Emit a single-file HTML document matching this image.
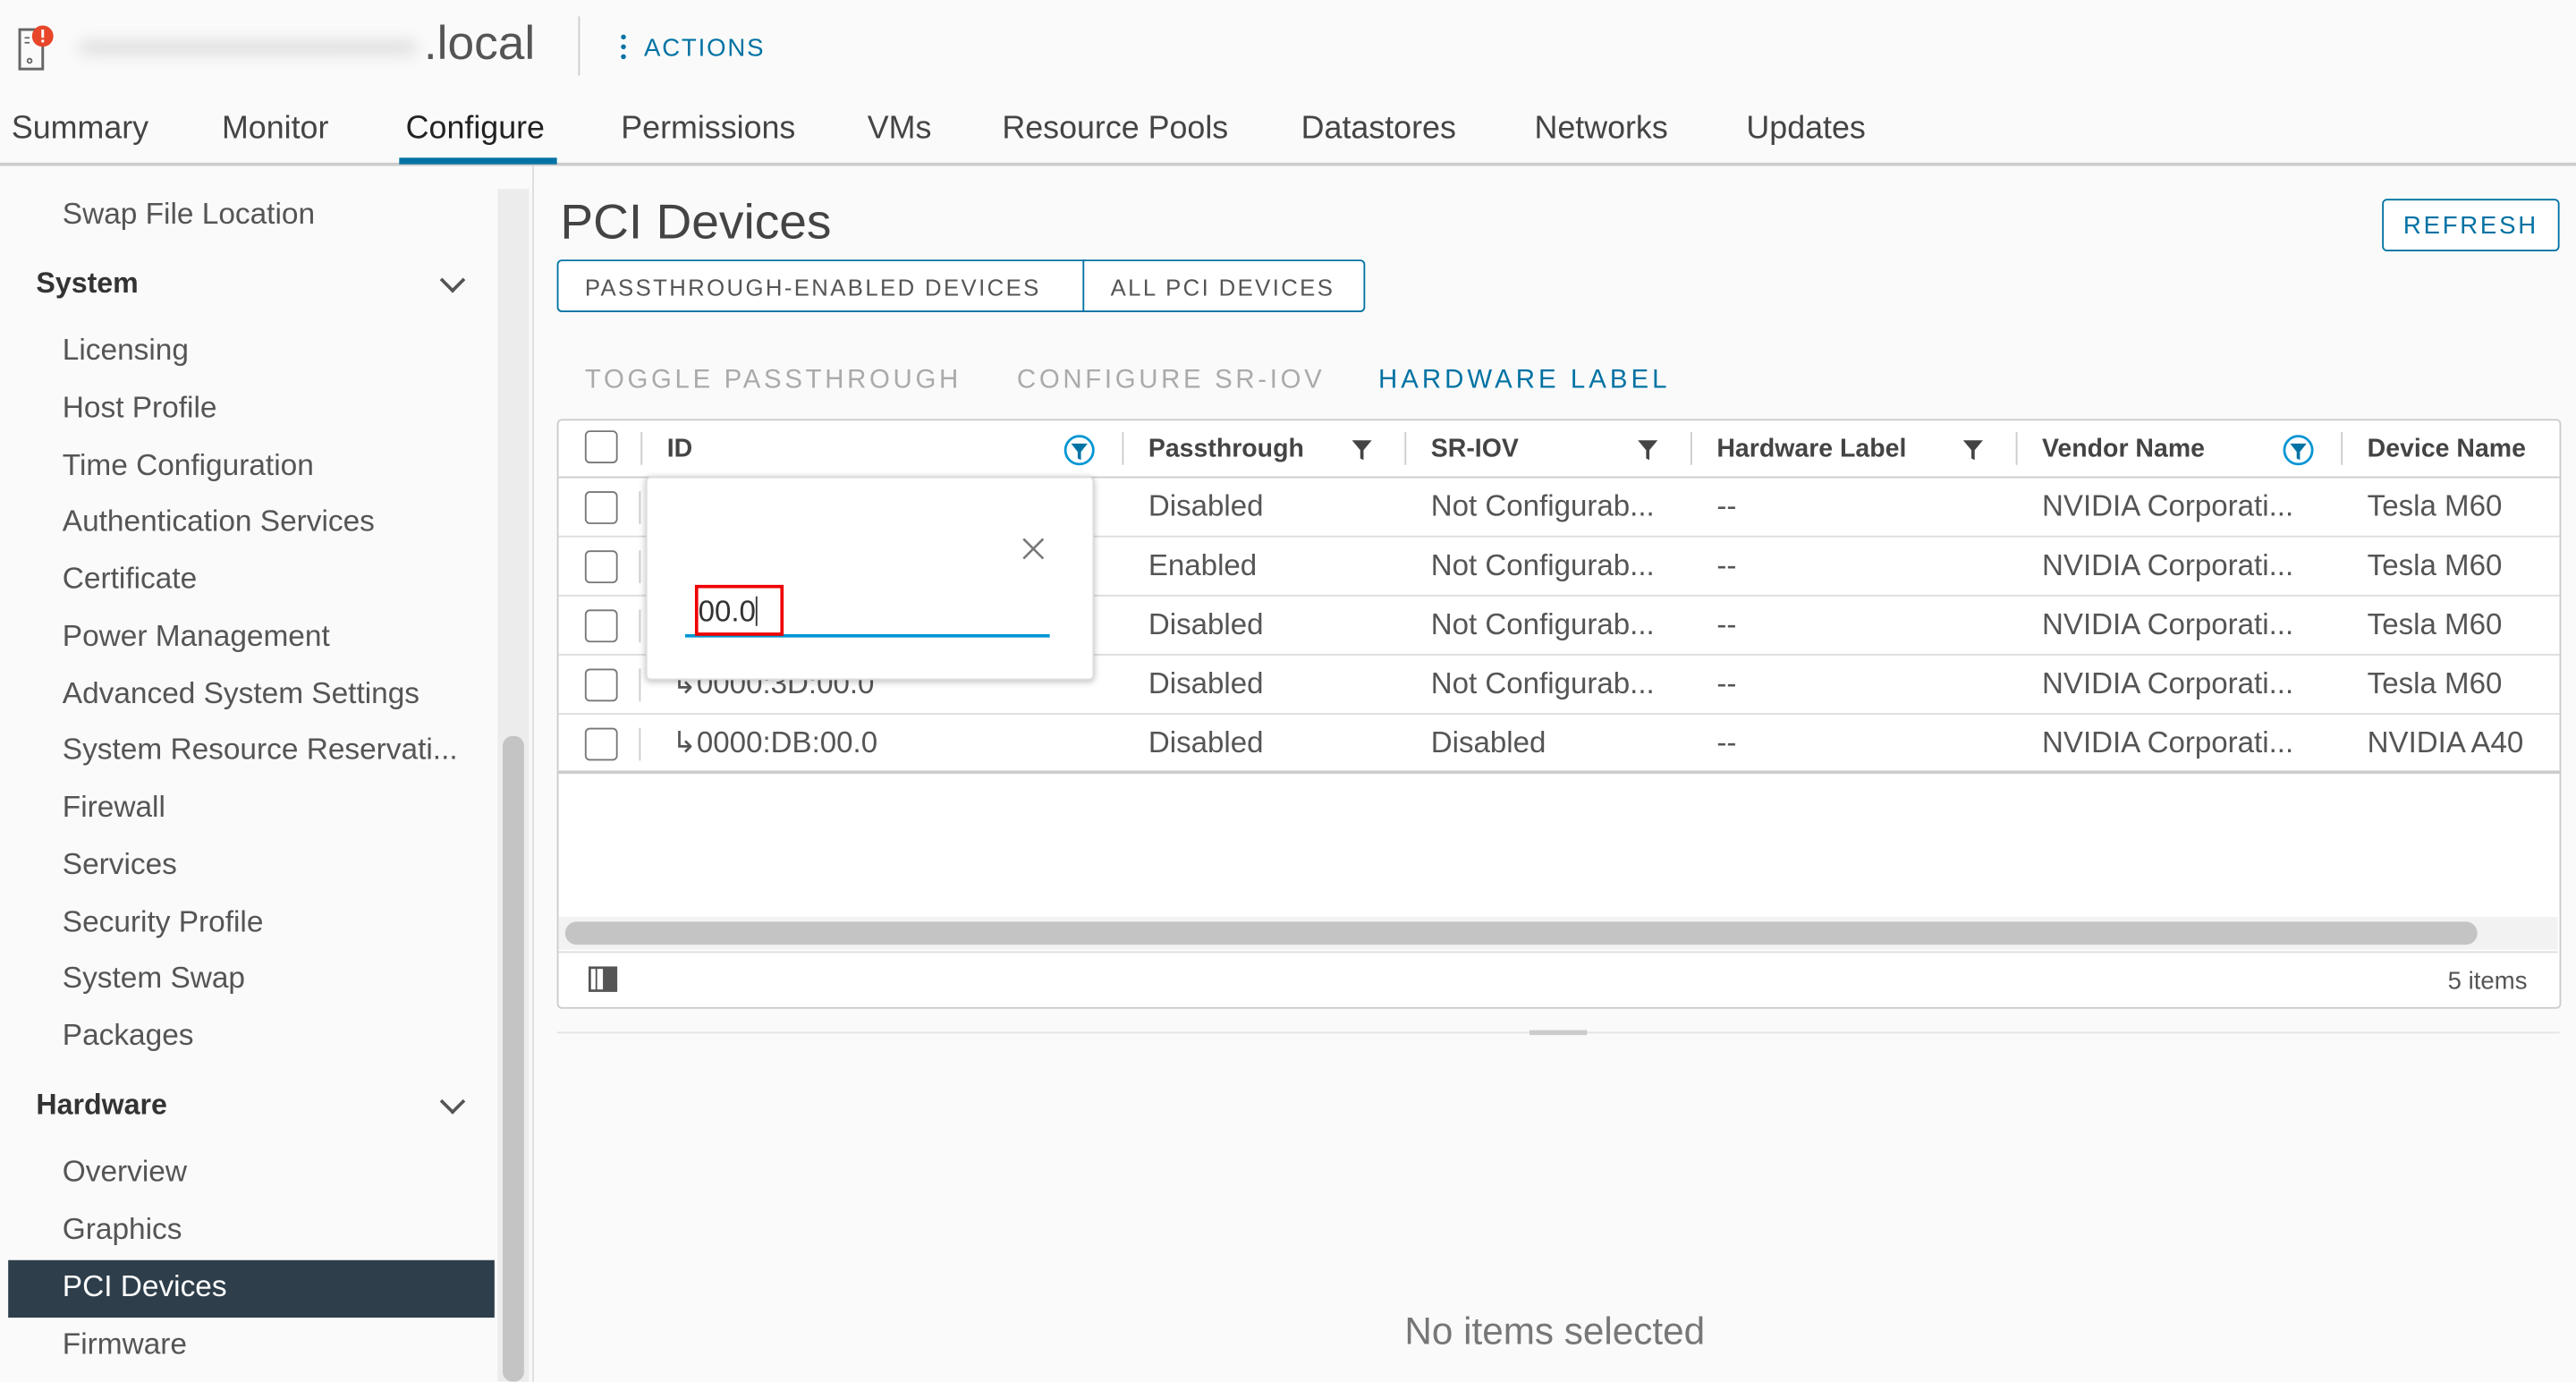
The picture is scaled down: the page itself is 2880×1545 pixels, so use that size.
<!DOCTYPE html>
<html><head><meta charset="utf-8"><style>
html,body{margin:0;padding:0;width:2880px;height:1544px;overflow:hidden;background:#fafafa}
#w{position:absolute;left:0;top:0;width:1568px;height:841px;transform:scale(1.8367);transform-origin:0 0;font-family:"Liberation Sans",sans-serif;color:#333;background:#fafafa}
.a{position:absolute;white-space:nowrap}
.tab{font-size:19.5px;top:67px;color:#444}
.si{left:38px;font-size:18.2px;color:#555}
.sh{left:22px;font-size:17.5px;font-weight:bold;color:#333}
.chev{position:absolute;left:270px;width:9px;height:9px;border-right:2px solid #555;border-bottom:2px solid #555;transform:rotate(45deg)}
.cb{position:absolute;left:356px;width:18px;height:18px;border:1.5px solid #777;border-radius:3px;background:#fff}
.hd{font-size:15.5px;font-weight:bold;color:#444;top:265px}
.cell{font-size:18px;color:#555}
.vd{position:absolute;width:1px;height:20px;background:#ccc;top:263px}
.rl{position:absolute;left:340px;width:1218px;height:1px;background:#ddd}
</style></head><body><div id="w">
<svg class="a" style="left:10px;top:14px" width="24" height="30" viewBox="0 0 24 30"><rect x="2" y="4" width="14" height="24" fill="none" stroke="#666" stroke-width="1.6"/><line x1="5" y1="9" x2="8" y2="9" stroke="#666"/><line x1="5" y1="12" x2="8" y2="12" stroke="#666"/><circle cx="8" cy="23" r="1.3" fill="none" stroke="#666"/><circle cx="16" cy="8" r="6.5" fill="#e8462a"/><rect x="15.2" y="4" width="1.6" height="5" fill="#fff"/><rect x="15.2" y="10.2" width="1.6" height="1.6" fill="#fff"/></svg>
<div class="a" style="left:48px;top:24px;width:206px;height:10px;border-radius:5px;background:#e2e2e2;filter:blur(4px)"></div>
<div class="a" style="left:258px;top:11px;font-size:29px;color:#555">.local</div>
<div class="a" style="left:352px;top:10px;width:1px;height:36px;background:#ccc"></div>
<div class="a" style="left:378px;top:21px;width:3px;height:3px;border-radius:50%;background:#0072a3;box-shadow:0 6px 0 #0072a3,0 12px 0 #0072a3"></div>
<div class="a" style="left:392px;top:21px;font-size:15px;color:#0072a3;letter-spacing:1px">ACTIONS</div>
<div class="a tab" style="left:7px">Summary</div>
<div class="a tab" style="left:135px">Monitor</div>
<div class="a tab" style="left:247px;color:#222">Configure</div>
<div class="a tab" style="left:378px">Permissions</div>
<div class="a tab" style="left:528px">VMs</div>
<div class="a tab" style="left:610px">Resource Pools</div>
<div class="a tab" style="left:792px">Datastores</div>
<div class="a tab" style="left:934px">Networks</div>
<div class="a tab" style="left:1063px">Updates</div>
<div class="a" style="left:0;top:99px;width:1568px;height:2px;background:#ccc"></div>
<div class="a" style="left:243px;top:96px;width:96px;height:4px;background:#0072a3"></div>
<div class="a" style="left:303px;top:115px;width:19px;height:726px;background:#ececec"></div>
<div class="a" style="left:306px;top:448px;width:13px;height:393px;border-radius:6px;background:#c4c4c4"></div>
<div class="a" style="left:324px;top:101px;width:1px;height:740px;background:#ddd"></div>
<div class="a" style="left:5px;top:767px;width:296px;height:35px;background:#2e3e4b"></div>
<div class="a si" style="top:120px">Swap File Location</div>
<div class="a sh" style="top:162px">System</div><div class="chev" style="top:165px"></div>
<div class="a si" style="top:203px">Licensing</div>
<div class="a si" style="top:238px">Host Profile</div>
<div class="a si" style="top:273px">Time Configuration</div>
<div class="a si" style="top:307px">Authentication Services</div>
<div class="a si" style="top:342px">Certificate</div>
<div class="a si" style="top:377px">Power Management</div>
<div class="a si" style="top:412px">Advanced System Settings</div>
<div class="a si" style="top:446px">System Resource Reservati...</div>
<div class="a si" style="top:481px">Firewall</div>
<div class="a si" style="top:516px">Services</div>
<div class="a si" style="top:551px">Security Profile</div>
<div class="a si" style="top:585px">System Swap</div>
<div class="a si" style="top:620px">Packages</div>
<div class="a sh" style="top:662px">Hardware</div><div class="chev" style="top:665px"></div>
<div class="a si" style="top:703px">Overview</div>
<div class="a si" style="top:738px">Graphics</div>
<div class="a si" style="top:773px;color:#fff">PCI Devices</div>
<div class="a si" style="top:808px">Firmware</div>
<div class="a" style="left:341px;top:119px;font-size:30px;color:#444">PCI Devices</div>
<div class="a" style="left:1450px;top:121px;width:106px;height:30px;border:1px solid #0072a3;border-radius:3px;color:#0072a3;font-size:15px;letter-spacing:1.5px;text-align:center;line-height:31px;background:#fff">REFRESH</div>
<div class="a" style="left:339px;top:158px;width:490px;height:30px;border:1px solid #0072a3;border-radius:3px;background:#fff"></div>
<div class="a" style="left:659px;top:158px;width:1px;height:32px;background:#0072a3"></div>
<div class="a" style="left:356px;top:167px;font-size:14px;color:#555;letter-spacing:1.3px">PASSTHROUGH-ENABLED DEVICES</div>
<div class="a" style="left:676px;top:167px;font-size:14px;color:#555;letter-spacing:1.3px">ALL PCI DEVICES</div>
<div class="a" style="left:356px;top:223px;font-size:16px;color:#aaa;letter-spacing:2px">TOGGLE PASSTHROUGH</div>
<div class="a" style="left:619px;top:223px;font-size:16px;color:#aaa;letter-spacing:2px">CONFIGURE SR-IOV</div>
<div class="a" style="left:839px;top:223px;font-size:16px;color:#0072a3;letter-spacing:2.2px">HARDWARE LABEL</div>
<div class="a" style="left:339px;top:255px;width:1218px;height:357px;border:1px solid #ccc;border-radius:3px;background:#fff"></div>
<div class="rl" style="top:290px;background:#ccc"></div>
<div class="rl" style="top:326px"></div><div class="rl" style="top:362px"></div><div class="rl" style="top:398px"></div><div class="rl" style="top:434px"></div>
<div class="rl" style="top:469px;height:2px;background:#ccc"></div>
<div class="cb" style="top:262px"></div>
<div class="vd" style="left:390px"></div><div class="vd" style="left:683px"></div><div class="vd" style="left:855px"></div><div class="vd" style="left:1029px"></div><div class="vd" style="left:1227px"></div><div class="vd" style="left:1425px"></div>
<div class="a hd" style="left:406px">ID</div>
<div class="a hd" style="left:699px">Passthrough</div>
<div class="a hd" style="left:871px">SR-IOV</div>
<div class="a hd" style="left:1045px">Hardware Label</div>
<div class="a hd" style="left:1243px">Vendor Name</div>
<div class="a hd" style="left:1441px">Device Name</div>
<svg class="a" style="left:647px;top:264px" width="20" height="20" viewBox="0 0 20 20"><circle cx="10" cy="10" r="8.5" fill="none" stroke="#0095d3" stroke-width="1.5"/><path d="M5 6h10l-4 5v5l-2-1v-4z" fill="#0072a3"/></svg>
<svg class="a" style="left:1389px;top:264px" width="20" height="20" viewBox="0 0 20 20"><circle cx="10" cy="10" r="8.5" fill="none" stroke="#0095d3" stroke-width="1.5"/><path d="M5 6h10l-4 5v5l-2-1v-4z" fill="#0072a3"/></svg>
<svg class="a" style="left:822px;top:267px" width="14" height="14" viewBox="0 0 14 14"><path d="M1 1h12l-5 6v6l-2-1v-5z" fill="#444"/></svg>
<svg class="a" style="left:996px;top:267px" width="14" height="14" viewBox="0 0 14 14"><path d="M1 1h12l-5 6v6l-2-1v-5z" fill="#444"/></svg>
<svg class="a" style="left:1194px;top:267px" width="14" height="14" viewBox="0 0 14 14"><path d="M1 1h12l-5 6v6l-2-1v-5z" fill="#444"/></svg>
<div class="cb" style="top:299px"></div><div class="cb" style="top:335px"></div><div class="cb" style="top:371px"></div><div class="cb" style="top:407px"></div><div class="cb" style="top:443px"></div>
<div class="a" style="left:389px;top:299px;width:1px;height:20px;background:#ccc;box-shadow:0 36px 0 #ccc,0 72px 0 #ccc,0 108px 0 #ccc,0 144px 0 #ccc"></div>
<div class="a cell" style="left:699px;top:298px">Disabled</div>
<div class="a cell" style="left:699px;top:334px">Enabled</div>
<div class="a cell" style="left:699px;top:370px">Disabled</div>
<div class="a cell" style="left:699px;top:406px">Disabled</div>
<div class="a cell" style="left:699px;top:442px">Disabled</div>
<div class="a cell" style="left:871px;top:298px">Not Configurab...</div>
<div class="a cell" style="left:871px;top:334px">Not Configurab...</div>
<div class="a cell" style="left:871px;top:370px">Not Configurab...</div>
<div class="a cell" style="left:871px;top:406px">Not Configurab...</div>
<div class="a cell" style="left:871px;top:442px">Disabled</div>
<div class="a cell" style="left:1045px;top:298px">--</div><div class="a cell" style="left:1045px;top:334px">--</div><div class="a cell" style="left:1045px;top:370px">--</div><div class="a cell" style="left:1045px;top:406px">--</div><div class="a cell" style="left:1045px;top:442px">--</div>
<div class="a cell" style="left:1243px;top:298px">NVIDIA Corporati...</div>
<div class="a cell" style="left:1243px;top:334px">NVIDIA Corporati...</div>
<div class="a cell" style="left:1243px;top:370px">NVIDIA Corporati...</div>
<div class="a cell" style="left:1243px;top:406px">NVIDIA Corporati...</div>
<div class="a cell" style="left:1243px;top:442px">NVIDIA Corporati...</div>
<div class="a cell" style="left:1441px;top:298px">Tesla M60</div>
<div class="a cell" style="left:1441px;top:334px">Tesla M60</div>
<div class="a cell" style="left:1441px;top:370px">Tesla M60</div>
<div class="a cell" style="left:1441px;top:406px">Tesla M60</div>
<div class="a cell" style="left:1441px;top:442px">NVIDIA A40</div>
<div class="a cell" style="left:409px;top:406px">↳0000:3D:00.0</div>
<div class="a cell" style="left:409px;top:442px">↳0000:DB:00.0</div>
<div class="a" style="left:340px;top:558px;width:1217px;height:20px;background:#f2f2f2"></div>
<div class="a" style="left:344px;top:561px;width:1164px;height:14px;border-radius:7px;background:#c4c4c4"></div>
<div class="a" style="left:340px;top:579px;width:1217px;height:1px;background:#ddd"></div>
<svg class="a" style="left:358px;top:588px" width="18" height="16" viewBox="0 0 18 16"><rect x="1" y="1" width="16" height="14" fill="none" stroke="#555" stroke-width="1.5"/><rect x="9" y="1" width="8" height="14" fill="#555"/><line x1="5" y1="1" x2="5" y2="15" stroke="#555"/></svg>
<div class="a" style="left:1490px;top:589px;font-size:15px;color:#555">5 items</div>
<div class="a" style="left:339px;top:628px;width:1219px;height:1px;background:#e4e4e4"></div>
<div class="a" style="left:931px;top:627px;width:35px;height:3px;background:#ccc"></div>
<div class="a" style="left:855px;top:797px;font-size:23px;color:#777">No items selected</div>
<div class="a" style="left:393px;top:290px;width:271px;height:122px;background:#fff;border:1px solid #ddd;border-radius:3px;box-shadow:0 1px 4px rgba(0,0,0,.25)"></div>
<svg class="a" style="left:622px;top:327px" width="14" height="14" viewBox="0 0 14 14"><path d="M1 1L13 13M13 1L1 13" stroke="#777" stroke-width="1.4"/></svg>
<div class="a" style="left:417px;top:386px;width:222px;height:2px;background:#0095d3"></div>
<div class="a" style="left:423px;top:356px;width:50px;height:27px;border:2px solid #e00"></div>
<div class="a" style="left:425px;top:362px;font-size:18px;color:#333">00.0<span style="display:inline-block;width:1px;height:18px;background:#333;vertical-align:-3px"></span></div>
</div></body></html>
